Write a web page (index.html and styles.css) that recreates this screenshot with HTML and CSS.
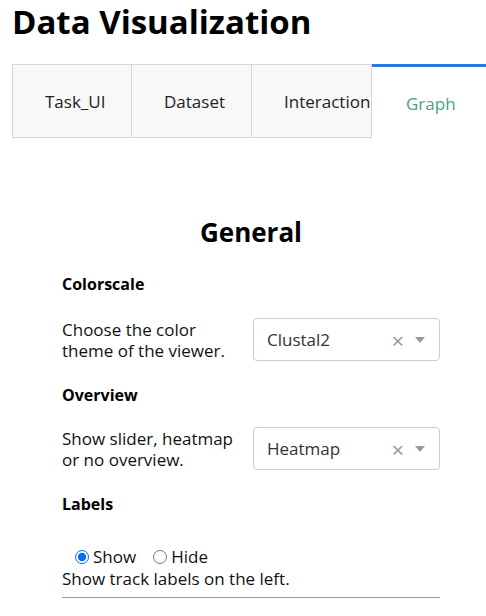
FILE: index.html
```html
<!DOCTYPE html>
<html lang="en">
<head>
<meta charset="utf-8">
<title>Data Visualization</title>
<link rel="stylesheet" href="styles.css">
</head>
<body>
<h1 class="title">Data Visualization</h1>
<div class="tabs">
  <div class="tab">Task_UI</div>
  <div class="tab">Dataset</div>
  <div class="tab">Interaction</div>
  <div class="tab tab-active">Graph</div>
</div>
<section class="panel">
  <h2 class="panel-title">General</h2>

  <h4 class="field-title">Colorscale</h4>
  <div class="field-row">
    <p class="field-desc">Choose the color theme of the viewer.</p>
    <div class="select">
      <span class="select-value">Clustal2</span>
      <span class="select-clear">×</span>
      <span class="select-arrow"></span>
    </div>
  </div>

  <h4 class="field-title field-title-next">Overview</h4>
  <div class="field-row field-row-next">
    <p class="field-desc">Show slider, heatmap or no overview.</p>
    <div class="select">
      <span class="select-value">Heatmap</span>
      <span class="select-clear">×</span>
      <span class="select-arrow"></span>
    </div>
  </div>

  <h4 class="field-title field-title-last">Labels</h4>
  <div class="radio-group">
    <label class="radio-item radio-first"><input type="radio" name="labels" checked>Show</label>
    <label class="radio-item"><input type="radio" name="labels">Hide</label>
  </div>
  <p class="radio-desc">Show track labels on the left.</p>
  <div class="divider"></div>
</section>
</body>
</html>
```

FILE: styles.css
```css
html, body {
  margin: 0;
  padding: 0;
  background: #ffffff;
  overflow: hidden;
}

body {
  font-family: "Open Sans", "Noto Sans", sans-serif;
  font-size: 17px;
  color: #111;
  padding-left: 12px;
}

.title {
  margin: 0;
  font-size: 33px;
  line-height: 44px;
  font-weight: 700;
  color: #000;
}

.tabs {
  display: flex;
  margin-top: 20px;
  height: 74px;
}

.tab {
  box-sizing: border-box;
  width: 120px;
  flex: none;
  display: flex;
  align-items: center;
  padding-left: 32px;
  background: #f8f8f8;
  border: 1px solid #d6d6d6;
  border-left: none;
  color: #222;
  white-space: nowrap;
  font-size: 17px;
}

.tab:first-child {
  border-left: 1px solid #d6d6d6;
}

.tab-active {
  flex: 1;
  background: #fff;
  border: none;
  border-top: 3px solid #2a78e4;
  padding-left: 34px;
  padding-top: 2px;
  color: #4ba08d;
}

.panel {
  margin-left: 50px;
  width: 378px;
}

.panel-title {
  margin: 77px 0 0;
  text-align: center;
  font-size: 26px;
  line-height: 34px;
  font-weight: 700;
  color: #000;
}

.field-title {
  margin: 24px 0 0;
  font-size: 16px;
  line-height: 22px;
  font-weight: 700;
  color: #000;
}

.field-title-next {
  margin-top: 23px;
}

.field-title-last {
  margin-top: 23px;
}

.field-row {
  display: flex;
  align-items: center;
  margin-top: 23px;
}

.field-row-next {
  margin-top: 21px;
}

.field-desc {
  margin: 0;
  width: 180px;
  flex: none;
  line-height: 21px;
}

.select {
  box-sizing: border-box;
  width: 187px;
  height: 43px;
  margin-left: auto;
  border: 1px solid #ccc;
  border-radius: 4px;
  display: flex;
  align-items: center;
  padding: 0 14px 0 13px;
  background: #fff;
}

.select-value {
  flex: 1;
  color: #333;
}

.select-clear {
  color: #999;
  font-size: 22px;
  line-height: 20px;
  margin-right: 11px;
}

.select-arrow {
  width: 0;
  height: 0;
  border-style: solid;
  border-width: 6px 5.5px 0;
  border-color: #999 transparent transparent;
}

.radio-group {
  margin-top: 31px;
  padding-left: 13px;
  display: flex;
  line-height: 22px;
}

.radio-item {
  display: inline-flex;
  align-items: center;
}

.radio-item input {
  margin: 0 4px 0 0;
  width: 14px;
  height: 14px;
  accent-color: #0a6cf0;
}

.radio-first {
  margin-right: 17px;
}

.radio-desc {
  margin: 1px 0 0;
  line-height: 20px;
}

.divider {
  margin-top: 8px;
  border-top: 1px solid #999;
}
```
